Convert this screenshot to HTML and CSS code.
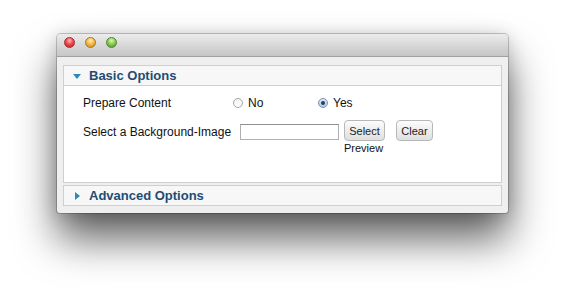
FILE: index.html
```html
<!DOCTYPE html>
<html>
<head>
<meta charset="utf-8">
<link rel="stylesheet" href="styles.css">
</head>
<body>
<div class="window">
  <div class="titlebar">
    <span class="light red"></span>
    <span class="light yellow"></span>
    <span class="light green"></span>
  </div>
  <div class="content">
    <div class="panel">
      <div class="panel-head"><span class="tri down"></span>Basic Options</div>
      <div class="panel-body">
        <div class="row row-radio">
          <span class="label l1">Prepare Content</span>
          <span class="opt opt-no"><span class="radio"></span>No</span>
          <span class="opt"><span class="radio checked"></span>Yes</span>
        </div>
        <div class="row row-image">
          <span class="label l2">Select a Background-Image</span>
          <span class="field"></span>
          <span class="btn-col">
            <span class="btn btn-select">Select</span>
            <span class="preview">Preview</span>
          </span>
          <span class="btn btn-clear">Clear</span>
        </div>
      </div>
    </div>
    <div class="panel panel-closed">
      <div class="panel-head"><span class="tri right"></span>Advanced Options</div>
    </div>
  </div>
</div>
</body>
</html>
```

FILE: styles.css
```css
html {
  margin: 0;
  padding: 0;
  height: 100%;
  background: #ffffff;
}
body {
  margin: 0;
  min-height: 100%;
  box-sizing: border-box;
  padding: 34px 0 0 57px;
  font-family: "Liberation Sans", Arial, sans-serif;
}
.window {
  width: 451px;
  height: 179px;
  box-sizing: border-box;
  background: #efefef;
  border-radius: 4px 4px 3px 3px;
  box-shadow: 0 26px 42px rgba(0,0,0,0.62), 0 2px 18px rgba(0,0,0,0.18), 0 0 0 1px rgba(0,0,0,0.2);
  display: flex;
  flex-direction: column;
}
.titlebar {
  height: 23px;
  box-sizing: border-box;
  border-radius: 4px 4px 0 0;
  background: linear-gradient(#ececec, #d4d4d4 60%, #c6c6c6);
  border-bottom: 1px solid #a0a0a0;
  display: flex;
  align-items: flex-start;
  padding: 3px 0 0 7px;
  gap: 10px;
}
.light {
  width: 11px;
  height: 11px;
  border-radius: 50%;
  box-sizing: border-box;
}
.red { background: radial-gradient(circle at 50% 30%, #ffc0c0 0, #f04a4e 45%, #b8191e 100%); border: 1px solid #a03030; }
.yellow { background: radial-gradient(circle at 50% 30%, #fff0c0 0, #f7bd48 45%, #c98414 100%); border: 1px solid #a67620; }
.green { background: radial-gradient(circle at 50% 30%, #e0f8c0 0, #86d057 45%, #46922a 100%); border: 1px solid #548230; }
.content {
  padding: 8px 6px 0 6px;
  display: flex;
  flex-direction: column;
  gap: 2px;
}
.panel {
  border: 1px solid #cfcfcf;
  background: #f7f7f7;
}
.panel-head {
  height: 19px;
  display: flex;
  align-items: center;
  padding-left: 9px;
  font-size: 13px;
  font-weight: bold;
  color: #1d4d74;
  background: #f7f7f7;
}
.tri {
  width: 0;
  height: 0;
  margin-right: 8px;
}
.tri.down {
  border-left: 4px solid transparent;
  border-right: 4px solid transparent;
  border-top: 5px solid #2c8ab5;
  margin-top: 2px;
}
.tri.right {
  border-top: 4px solid transparent;
  border-bottom: 4px solid transparent;
  border-left: 5px solid #2c8ab5;
  margin-left: 2px;
  margin-right: 9px;
}
.panel-body {
  height: 97px;
  box-sizing: border-box;
  background: #ffffff;
  border-top: 1px solid #cfcfcf;
  padding: 10px 0 0 19px;
  font-size: 12px;
  color: #111;
}
.row {
  display: flex;
  align-items: center;
}
.row-radio {
  height: 14px;
}
.l1 { width: 150px; }
.opt {
  display: flex;
  align-items: center;
}
.opt-no { width: 85px; }
.radio {
  width: 10px;
  height: 10px;
  box-sizing: border-box;
  border-radius: 50%;
  border: 1px solid #a5a5a5;
  background: linear-gradient(#f2f2f2, #ffffff);
  margin-right: 5px;
  display: flex;
  align-items: center;
  justify-content: center;
}
.radio.checked::after {
  content: "";
  width: 4px;
  height: 4px;
  border-radius: 50%;
  background: #2b3f5c;
}
.radio.checked {
  border-color: #7d92ad;
  background: linear-gradient(#d8e8f8, #a8cbee);
}
.row-image {
  align-items: flex-start;
  margin-top: 10px;
}
.l2 {
  width: 157px;
  padding-top: 5px;
}
.field {
  width: 99px;
  height: 16px;
  box-sizing: border-box;
  border: 1px solid #b0b0b0;
  border-top-color: #909090;
  background: #fff;
  margin-top: 4px;
}
.btn-col {
  display: flex;
  flex-direction: column;
  margin-left: 5px;
}
.btn {
  height: 21px;
  box-sizing: border-box;
  border: 1px solid #b8b8b8;
  border-radius: 4px;
  background: linear-gradient(#fdfdfd, #ededed 50%, #dfdfdf);
  font-size: 11px;
  color: #222;
  display: flex;
  align-items: center;
  justify-content: center;
}
.btn-select { width: 41px; }
.btn-clear { width: 37px; margin-left: 11px; }
.preview {
  font-size: 11px;
  margin-top: 1px;
  color: #111;
}
```
